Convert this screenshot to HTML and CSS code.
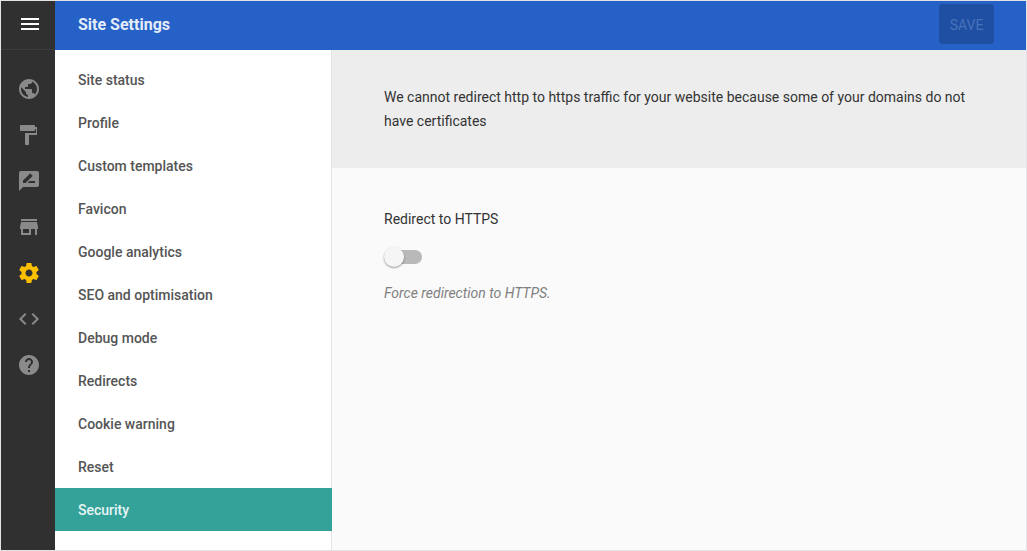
FILE: index.html
```html
<!DOCTYPE html>
<html lang="en">
<head>
<meta charset="utf-8">
<title>Site Settings</title>
<meta name="viewport" content="width=device-width, initial-scale=1">
<link rel="stylesheet" href="styles.css">
</head>
<body>
<div class="app">
  <aside class="rail">
    <button class="menu-button" type="button" aria-label="Menu">
      <svg class="icon" viewBox="0 0 24 24"><path d="M3 18h18v-2H3v2zm0-5h18v-2H3v2zm0-7v2h18V6H3z"/></svg>
    </button>
    <nav class="rail-nav" aria-label="Main">
      <a class="rail-link" href="#" aria-label="Site"><svg class="icon" viewBox="0 0 24 24"><path d="M12 2C6.48 2 2 6.48 2 12s4.480 10 10 10 10-4.480 10-10S17.520 2 12 2zm-1 17.930c-3.950-.49-7-3.850-7-7.930 0-.62.080-1.210.21-1.790L9 15v1c0 1.100.9 2 2 2v1.930zm6.900-2.540c-.26-.81-1-1.390-1.900-1.390h-1v-3c0-.55-.45-1-1-1H8v-2h2c.55 0 1-.45 1-1V7h2c1.100 0 2-.9 2-2v-.41c2.930 1.190 5 4.060 5 7.410 0 2.080-.8 3.970-2.100 5.390z"/></svg></a>
      <a class="rail-link" href="#" aria-label="Design"><svg class="icon" viewBox="0 0 24 24"><path d="M18 4V3c0-.55-.45-1-1-1H4c-.55 0-1 .45-1 1v4c0 .55.45 1 1 1h13c.55 0 1-.45 1-1V6h1v4H8v11c0 .55.45 1 1 1h2c.55 0 1-.45 1-1v-9h8V4h-2z"/></svg></a>
      <a class="rail-link" href="#" aria-label="Blog"><svg class="icon" viewBox="0 0 24 24"><path d="M20 2H4c-1.100 0-1.990.9-1.990 2L2 22l4-4h14c1.100 0 2-.9 2-2V4c0-1.100-.9-2-2-2zM6 14v-2.470l6.880-6.880c.2-.2.510-.2.710 0l1.770 1.770c.2.200.2.510 0 .71L8.470 14H6zm12 0h-7.500l2-2H18v2z"/></svg></a>
      <a class="rail-link" href="#" aria-label="Store"><svg class="icon" viewBox="0 0 24 24"><path d="M20 4H4v2h16V4zm1 10v-2l-1-5H4l-1 5v2h1v6h10v-6h4v6h2v-6h1zm-9 4H6v-4h6v4z"/></svg></a>
      <a class="rail-link rail-link-active" href="#" aria-label="Settings" aria-current="page"><svg class="icon" viewBox="0 0 24 24"><path d="M19.430 12.980c.04-.32.070-.64.070-.98s-.03-.66-.07-.98l2.110-1.650c.19-.15.240-.42.120-.64l-2-3.460c-.12-.22-.39-.3-.61-.22l-2.490 1c-.52-.4-1.080-.73-1.690-.98l-.38-2.650C14.460 2.180 14.250 2 14 2h-4c-.25 0-.46.180-.49.420l-.38 2.650c-.61.250-1.170.590-1.690.98l-2.490-1c-.23-.09-.49 0-.61.220l-2 3.460c-.13.220-.07.490.12.640l2.110 1.650c-.04.320-.07.650-.07.980s.030.660.070.980l-2.110 1.650c-.19.150-.24.420-.12.640l2 3.460c.12.220.39.300.61.220l2.490-1c.52.400 1.080.730 1.690.980l.38 2.650c.030.240.24.420.49.420h4c.25 0 .46-.18.49-.42l.38-2.650c.61-.25 1.170-.59 1.690-.98l2.490 1c.23.090.49 0 .61-.22l2-3.460c.12-.22.070-.49-.12-.64l-2.110-1.650zM12 15.500c-1.930 0-3.500-1.570-3.500-3.500s1.570-3.500 3.500-3.500 3.500 1.570 3.500 3.500-1.570 3.500-3.500 3.500z"/></svg></a>
      <a class="rail-link" href="#" aria-label="Code"><svg class="icon" viewBox="0 0 24 24"><path d="M9.400 16.600L4.800 12l4.600-4.600L8 6l-6 6 6 6 1.400-1.400zm5.200 0l4.600-4.600-4.600-4.600L16 6l6 6-6 6-1.400-1.400z"/></svg></a>
      <a class="rail-link" href="#" aria-label="Help"><svg class="icon" viewBox="0 0 24 24"><path d="M12 2C6.480 2 2 6.480 2 12s4.480 10 10 10 10-4.480 10-10S17.520 2 12 2zm1 17h-2v-2h2v2zm2.070-7.750l-.9.920C13.450 12.900 13 13.500 13 15h-2v-.5c0-1.100.45-2.100 1.170-2.830l1.240-1.260c.37-.36.590-.86.590-1.410 0-1.100-.9-2-2-2s-2 .9-2 2H8c0-2.210 1.790-4 4-4s4 1.790 4 4c0 .88-.36 1.680-.93 2.250z"/></svg></a>
    </nav>
  </aside>
  <div class="page">
    <header class="topbar">
      <h1 class="title">Site Settings</h1>
      <button class="save" type="button" disabled>SAVE</button>
    </header>
    <div class="body">
      <nav class="sections" aria-label="Settings sections">
        <a class="section" href="#">Site status</a>
        <a class="section" href="#">Profile</a>
        <a class="section" href="#">Custom templates</a>
        <a class="section" href="#">Favicon</a>
        <a class="section" href="#">Google analytics</a>
        <a class="section" href="#">SEO and optimisation</a>
        <a class="section" href="#">Debug mode</a>
        <a class="section" href="#">Redirects</a>
        <a class="section" href="#">Cookie warning</a>
        <a class="section" href="#">Reset</a>
        <a class="section section-active" href="#" aria-current="page">Security</a>
      </nav>
      <main class="content">
        <p class="notice">We cannot redirect http to https traffic for your website because some of your domains do not have certificates</p>
        <div class="setting">
          <label class="setting-label" for="https">Redirect to HTTPS</label>
          <input class="switch" type="checkbox" role="switch" id="https" aria-describedby="https-hint">
          <p class="hint" id="https-hint">Force redirection to HTTPS.</p>
        </div>
      </main>
    </div>
  </div>
</div>
</body>
</html>
```
FILE: styles.css
```css
* {
  box-sizing: border-box;
}

body {
  margin: 0;
  font: 14px/24px Roboto, "Liberation Sans", sans-serif;
  color: #333;
}

a {
  text-decoration: none;
}

.app {
  display: flex;
  min-height: 100vh;
  border: 1px solid #e4e4e6;
}

.rail {
  flex: none;
  width: 54px;
  background: #303030;
}

.menu-button {
  display: flex;
  align-items: center;
  justify-content: center;
  width: 100%;
  height: 49px;
  padding: 0 0 2px 4px;
  border: 0;
  border-bottom: 1px solid #3d3d3d;
  background: none;
  color: #fff;
}

.icon {
  display: block;
  width: 24px;
  height: 24px;
  fill: currentColor;
}

.rail-nav {
  display: flex;
  flex-direction: column;
  gap: 22px;
  align-items: center;
  padding: 27px 0 27px 2px;
}

.rail-link {
  color: #8a8a8a;
}

.rail-link-active {
  color: #f9bf00;
}

.page {
  display: flex;
  flex: 1;
  flex-direction: column;
  min-width: 0;
}

.topbar {
  display: flex;
  align-items: center;
  justify-content: space-between;
  height: 49px;
  padding: 0 32px 3px 23px;
  background: #2661c7;
}

.title {
  margin: 0;
  padding-top: 2px;
  font-size: 16px;
  font-weight: 700;
  color: #e4ecf9;
}

.save {
  min-width: 55px;
  height: 40px;
  padding: 2px 8px 0;
  border: 0;
  border-radius: 4px;
  background: #1f4fa2;
  font: 14px/24px Roboto, "Liberation Sans", sans-serif;
  color: #4772b9;
}

.body {
  display: flex;
  flex: 1;
}

.sections {
  flex: none;
  width: 277px;
  padding: 8px 0;
  background: linear-gradient(#e4e4e4, #e4e4e4) right / 1px 100% no-repeat #fff;
}

.section {
  display: flex;
  align-items: center;
  height: 43px;
  padding: 0 23px;
  font-weight: 500;
  color: #555;
}

.section-active {
  background: #35a29a;
  color: #e6f5f4;
}

.content {
  flex: 1;
  min-width: 0;
  background: #fafafa;
}

.notice {
  margin: 0;
  padding: 35px 52px;
  background: #ededed;
}

.setting {
  display: flex;
  flex-direction: column;
  align-items: flex-start;
  padding: 39px 52px;
}

.switch {
  position: relative;
  appearance: none;
  width: 38px;
  height: 14px;
  margin: 19px 0 17px;
  border-radius: 7px;
  background: #b9b9b9;
}

.switch::before {
  content: "";
  position: absolute;
  top: -3px;
  left: 0;
  width: 20px;
  height: 20px;
  border-radius: 50%;
  background: #f5f5f5;
  box-shadow: 0 1px 2px rgba(0, 0, 0, 0.4);
}

.switch:checked::before {
  right: 0;
  left: auto;
}

.hint {
  margin: 0;
  font-style: italic;
  color: #808080;
}
```
